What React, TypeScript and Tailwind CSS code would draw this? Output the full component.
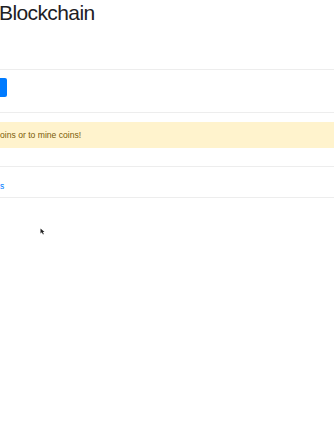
export default function App() {
  return (
    <div
      className="relative w-[334px] h-[446px] overflow-hidden bg-white text-[#212529]"
      style={{ fontFamily: '"Liberation Sans", Arial, sans-serif' }}
    >
      {/* Title */}
      <h1 className="-ml-[1px] text-[21px] leading-[25px] tracking-[-0.6px] font-normal whitespace-nowrap text-[#1d2024]">
        Blockchain
      </h1>

      {/* Wallet row */}
      <div className="mt-[44px] h-[44px] border-t border-b border-[#ededed] flex items-start pt-[8px]">
        <div className="w-[7px] h-[19px] bg-[#007bff] rounded-r-[2px]" />
      </div>

      {/* Alert */}
      <div className="mt-[9px] h-[26px] bg-[#fff3cd] flex items-center">
        <span className="whitespace-nowrap text-[8.6px] leading-[11px] text-[#7a5c08]">
          oins or to mine coins!
        </span>
      </div>

      {/* Link row */}
      <div className="mt-[18px] h-[32px] border-t border-b border-[#ededed] pt-[14px]">
        <span className="block text-[8.5px] leading-[11px] text-[#007bff]">s</span>
      </div>

      {/* Mouse pointer */}
      <svg
        className="absolute left-[40px] top-[228px]"
        width="5"
        height="7"
        viewBox="0 0 5 7"
      >
        <path d="M0.5 0.5 L0.5 5.5 L1.8 4.3 L3 6.5 L3.8 6 L2.8 4 L4.5 4 Z" fill="#222" />
      </svg>
    </div>
  )
}
